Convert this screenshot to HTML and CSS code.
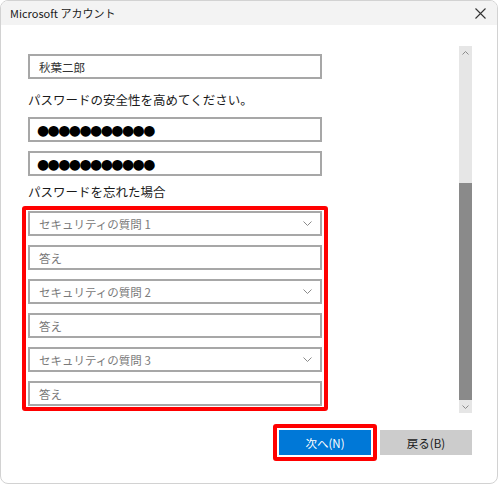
FILE: index.html
```html
<!DOCTYPE html>
<html lang="ja">
<head>
  <meta charset="UTF-8">
  <title>Microsoft アカウント</title>
  <link rel="stylesheet" href="styles.css">
</head>
<body>

  <div class="window">
    <div class="titlebar">
      <span class="title">Microsoft アカウント</span>
      <svg class="close" width="11" height="11" viewBox="0 0 11 11">
        <path d="M0.5 0.5 L10.5 10.5 M10.5 0.5 L0.5 10.5" stroke="#333" stroke-width="1.1" fill="none"/>
      </svg>
    </div>

    <div class="main">
      <div class="content">
        <div class="field">秋葉二郎</div>

        <p class="label first">パスワードの安全性を高めてください。</p>
        <div class="field dots">●●●●●●●●●●●</div>
        <div class="field dots">●●●●●●●●●●●</div>

        <p class="label second">パスワードを忘れた場合</p>
        <div class="highlight group">
          <div class="field select placeholder">セキュリティの質問 1<svg width="9" height="5" viewBox="0 0 9 5"><path d="M0.5 0.5 L4.5 4.5 L8.5 0.5" stroke="#8a8a8a" fill="none"/></svg></div>
          <div class="field placeholder">答え</div>
          <div class="field select placeholder">セキュリティの質問 2<svg width="9" height="5" viewBox="0 0 9 5"><path d="M0.5 0.5 L4.5 4.5 L8.5 0.5" stroke="#8a8a8a" fill="none"/></svg></div>
          <div class="field placeholder">答え</div>
          <div class="field select placeholder">セキュリティの質問 3<svg width="9" height="5" viewBox="0 0 9 5"><path d="M0.5 0.5 L4.5 4.5 L8.5 0.5" stroke="#8a8a8a" fill="none"/></svg></div>
          <div class="field placeholder">答え</div>
        </div>
      </div>

      <div class="scrollbar">
        <div class="arrow"><svg width="7" height="4" viewBox="0 0 7 4"><path d="M0.5 3.5 L3.5 0.5 L6.5 3.5" stroke="#8a8a8a" fill="none"/></svg></div>
        <div class="track"></div>
        <div class="thumb"></div>
        <div class="arrow"><svg width="7" height="4" viewBox="0 0 7 4"><path d="M0.5 0.5 L3.5 3.5 L6.5 0.5" stroke="#8a8a8a" fill="none"/></svg></div>
      </div>
    </div>

    <div class="footer">
      <div class="highlight">
        <button class="btn primary">次へ(N)</button>
      </div>
      <button class="btn">戻る(B)</button>
    </div>
  </div>

</body>
</html>
```

FILE: styles.css
```css
body {
  margin: 0;
  background: #ffffff;
  font-family: "Noto Sans CJK JP", "Noto Sans", sans-serif;
  color: #1a1a1a;
}

.window {
  width: 498px;
  height: 484px;
  box-sizing: border-box;
  border: 1px solid #d2d2d2;
  border-radius: 8px;
  overflow: hidden;
  background: #fff;
}

.titlebar {
  height: 24px;
  background: #f3f3f3;
  display: flex;
  align-items: center;
  justify-content: space-between;
  padding: 0 11px 0 9px;
}

.title {
  font-size: 11px;
  color: #1a1a1a;
}

.main {
  height: 388px;
  box-sizing: border-box;
  padding: 21px 0 0 27px;
  display: flex;
}

.content {
  flex: 1;
  padding-top: 8px;
}

.field {
  width: 294px;
  height: 25px;
  box-sizing: border-box;
  border: 2px solid #a7a7a7;
  padding: 0 9px;
  font-size: 11.5px;
  color: #333;
  display: flex;
  align-items: center;
}

.field + .field {
  margin-top: 9px;
}

.dots {
  font-family: "DejaVu Sans", sans-serif;
  font-size: 14px;
  letter-spacing: -1.6px;
  padding-left: 7px;
  color: #000;
}

.field.placeholder {
  color: #7a7a7a;
}

.select {
  justify-content: space-between;
  padding-right: 8px;
}

.label {
  margin: 0;
  font-size: 12.5px;
  line-height: 18px;
  color: #1a1a1a;
}

.label.first {
  margin: 12px 0 8px;
}

.label.second {
  margin: 7px 0 5px;
}

.highlight {
  border: 4px solid #ff0000;
  border-radius: 3px;
}

.group {
  width: 294px;
  margin-left: -6px;
  padding: 1px 2px;
}

.group .field + .field {
  margin-top: 9px;
}

.scrollbar {
  width: 13px;
  height: 367px;
  margin-right: 25px;
  background: #e6e6e6;
  display: flex;
  flex-direction: column;
}

.arrow {
  height: 13px;
  display: flex;
  align-items: center;
  justify-content: center;
}

.track {
  height: 124px;
}

.thumb {
  flex: 1;
  background: #8a8a8a;
}

.footer {
  display: flex;
  justify-content: flex-end;
  align-items: center;
  gap: 3px;
  padding: 11px 25px 0 0;
}

.highlight .btn {
  margin: 2px;
  display: block;
}

.btn {
  width: 92px;
  height: 25px;
  border: none;
  border-radius: 0;
  background: #cccccc;
  font-family: "Noto Sans CJK JP", sans-serif;
  font-size: 11.5px;
  color: #1a1a1a;
  padding: 0;
}

.btn.primary {
  background: #0078d7;
  color: #fff;
}
```
